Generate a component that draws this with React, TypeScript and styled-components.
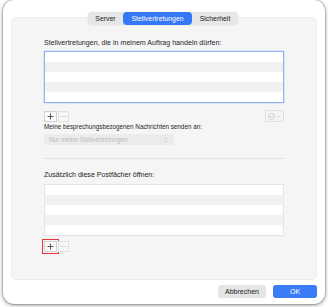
import React from "react";
import styled, { createGlobalStyle } from "styled-components";

const Global = createGlobalStyle`
  html, body {
    margin: 0;
    padding: 0;
    background: #ffffff;
    font-family: "Liberation Sans", Arial, sans-serif;
  }
`;

// Fenster
const Window = styled.div`
  box-sizing: border-box;
  width: 322px;
  height: 304px;
  margin: 0 3px 3px 3px;
  background: #ffffff;
  border-radius: 11px;
  box-shadow: 0 0 0 0.5px rgba(0, 0, 0, 0.25), 0 1px 4px rgba(0, 0, 0, 0.45);
  padding: 12px 8px 0 8px;
  display: flex;
  flex-direction: column;
`;

const TabBar = styled.div`
  position: relative;
  z-index: 1;
  align-self: center;
  display: flex;
  height: 13px;
  margin-bottom: -8px;
  margin-left: -2px;
  background: #e6e6e6;
  border-radius: 4px;
  box-shadow: 0 0 0 0.5px rgba(0, 0, 0, 0.06);
`;

const Tab = styled.div<{ $active?: boolean; $w: number }>`
  width: ${(p) => p.$w}px;
  display: flex;
  align-items: center;
  justify-content: center;
  font-size: 6.9px;
  color: ${(p) => (p.$active ? "#ffffff" : "#222222")};
  background: ${(p) => (p.$active ? "#3478f6" : "transparent")};
  border-radius: 4px;
`;

const Panel = styled.div`
  box-sizing: border-box;
  height: 263px;
  background: #f5f5f5;
  border-radius: 5px;
  border: 0.5px solid #ececec;
  padding: 21px 32px 0 32px;
  display: flex;
  flex-direction: column;
`;

const Label = styled.div<{ $small?: boolean; $top: number }>`
  font-size: ${(p) => (p.$small ? 6.3 : 7.1)}px;
  line-height: ${(p) => (p.$small ? 8 : 9)}px;
  color: #1f1f1f;
  margin-top: ${(p) => p.$top}px;
  white-space: nowrap;
`;

const List = styled.div<{ $focus?: boolean; $top: number }>`
  box-sizing: border-box;
  margin-top: ${(p) => p.$top}px;
  border: 1px solid ${(p) => (p.$focus ? "#92b2f1" : "#e4e4e4")};
  box-shadow: ${(p) => (p.$focus ? "0 0 0 0.5px #c3d4f7" : "none")};
  display: flex;
  flex-direction: column;
  background: #ffffff;
`;

const Row = styled.div<{ $odd: boolean }>`
  height: 10px;
  background: ${(p) => (p.$odd ? "#f1f1f1" : "#ffffff")};
`;

const Controls = styled.div<{ $top: number }>`
  margin-top: ${(p) => p.$top}px;
  display: flex;
  align-items: center;
  justify-content: space-between;
`;

const PlusMinus = styled.div`
  display: flex;
  gap: 1px;
`;

const SmallButton = styled.div<{ $disabled?: boolean; $marked?: boolean }>`
  box-sizing: border-box;
  width: ${(p) => (p.$disabled ? 11 : 13)}px;
  height: 11px;
  border: 0.5px solid ${(p) => (p.$disabled ? "#e2e2e2" : "#d2d2d2")};
  background: ${(p) => (p.$disabled ? "#f7f7f7" : "#fbfbfb")};
  display: flex;
  align-items: center;
  justify-content: center;
  outline: ${(p) => (p.$marked ? "1.5px solid #e8343b" : "none")};
  outline-offset: 1px;
`;

const ActionButton = styled.div`
  box-sizing: border-box;
  width: 19px;
  height: 12px;
  border: 0.5px solid #dedede;
  border-radius: 2px;
  display: flex;
  align-items: center;
  justify-content: center;
  gap: 2px;
`;

const Select = styled.div`
  box-sizing: border-box;
  margin-top: 3px;
  width: 130px;
  height: 11px;
  background: #ebebeb;
  border-radius: 3px;
  padding: 0 6px 0 5px;
  display: flex;
  align-items: center;
  justify-content: space-between;
  font-size: 6.3px;
  color: #bdbdbd;
`;

const Separator = styled.div`
  margin-top: 13px;
  height: 1px;
  background: #e2e2e2;
`;

const Footer = styled.div`
  display: flex;
  justify-content: flex-end;
  gap: 7px;
  margin-top: 5px;
`;

const DialogButton = styled.div<{ $primary?: boolean; $w: number }>`
  width: ${(p) => p.$w}px;
  height: 13px;
  border-radius: 3px;
  display: flex;
  align-items: center;
  justify-content: center;
  font-size: 7px;
  color: ${(p) => (p.$primary ? "#ffffff" : "#222222")};
  background: ${(p) => (p.$primary ? "#3a7bf6" : "#e5e5e5")};
`;

const Plus = ({ color }: { color: string }) => (
  <svg width="7" height="7" viewBox="0 0 7 7">
    <path d="M3.5 0.5v6M0.5 3.5h6" stroke={color} strokeWidth="0.9" />
  </svg>
);

const Minus = () => (
  <svg width="7" height="7" viewBox="0 0 7 7">
    <path d="M0.5 3.5h6" stroke="#cfcfcf" strokeWidth="0.8" />
  </svg>
);

const rows = (n: number) =>
  Array.from({ length: n }, (_, i) => <Row key={i} $odd={i % 2 === 1} />);

export default function App() {
  return (
    <>
      <Global />
      <Window>
        <TabBar>
          <Tab $w={35}>Server</Tab>
          <Tab $w={69} $active>
            Stellvertretungen
          </Tab>
          <Tab $w={46}>Sicherheit</Tab>
        </TabBar>
        <Panel>
          <Label $top={0}>Stellvertretungen, die in meinem Auftrag handeln dürfen:</Label>
          <List $focus $top={3}>{rows(5)}</List>
          <Controls $top={7}>
            <PlusMinus>
              <SmallButton>
                <Plus color="#4a4a4a" />
              </SmallButton>
              <SmallButton $disabled>
                <Minus />
              </SmallButton>
            </PlusMinus>
            <ActionButton>
              <svg width="7" height="7" viewBox="0 0 7 7">
                <circle cx="3.5" cy="3.5" r="3" fill="none" stroke="#c4c4c4" strokeWidth="0.7" />
                <path d="M1.6 3.5h3.8" stroke="#c4c4c4" strokeWidth="0.7" />
              </svg>
              <svg width="4" height="3" viewBox="0 0 4 3">
                <path d="M0.5 0.7l1.5 1.5 1.5-1.5" fill="none" stroke="#c4c4c4" strokeWidth="0.7" />
              </svg>
            </ActionButton>
          </Controls>
          <Label $small $top={1}>Meine besprechungsbezogenen Nachrichten senden an:</Label>
          <Select>
            <span>Nur meine Stellvertretungen</span>
            <svg width="4" height="6" viewBox="0 0 4 6">
              <path d="M0.6 2.2l1.4-1.4 1.4 1.4M0.6 3.8l1.4 1.4 1.4-1.4" fill="none" stroke="#c2c2c2" strokeWidth="0.6" />
            </svg>
          </Select>
          <Separator />
          <Label $top={12}>Zusätzlich diese Postfächer öffnen:</Label>
          <List $top={4}>{rows(5)}</List>
          <Controls $top={5}>
            <PlusMinus>
              <SmallButton $marked>
                <Plus color="#4a4a4a" />
              </SmallButton>
              <SmallButton $disabled>
                <Minus />
              </SmallButton>
            </PlusMinus>
          </Controls>
        </Panel>
        <Footer>
          <DialogButton $w={48}>Abbrechen</DialogButton>
          <DialogButton $w={44} $primary>
            OK
          </DialogButton>
        </Footer>
      </Window>
    </>
  );
}
